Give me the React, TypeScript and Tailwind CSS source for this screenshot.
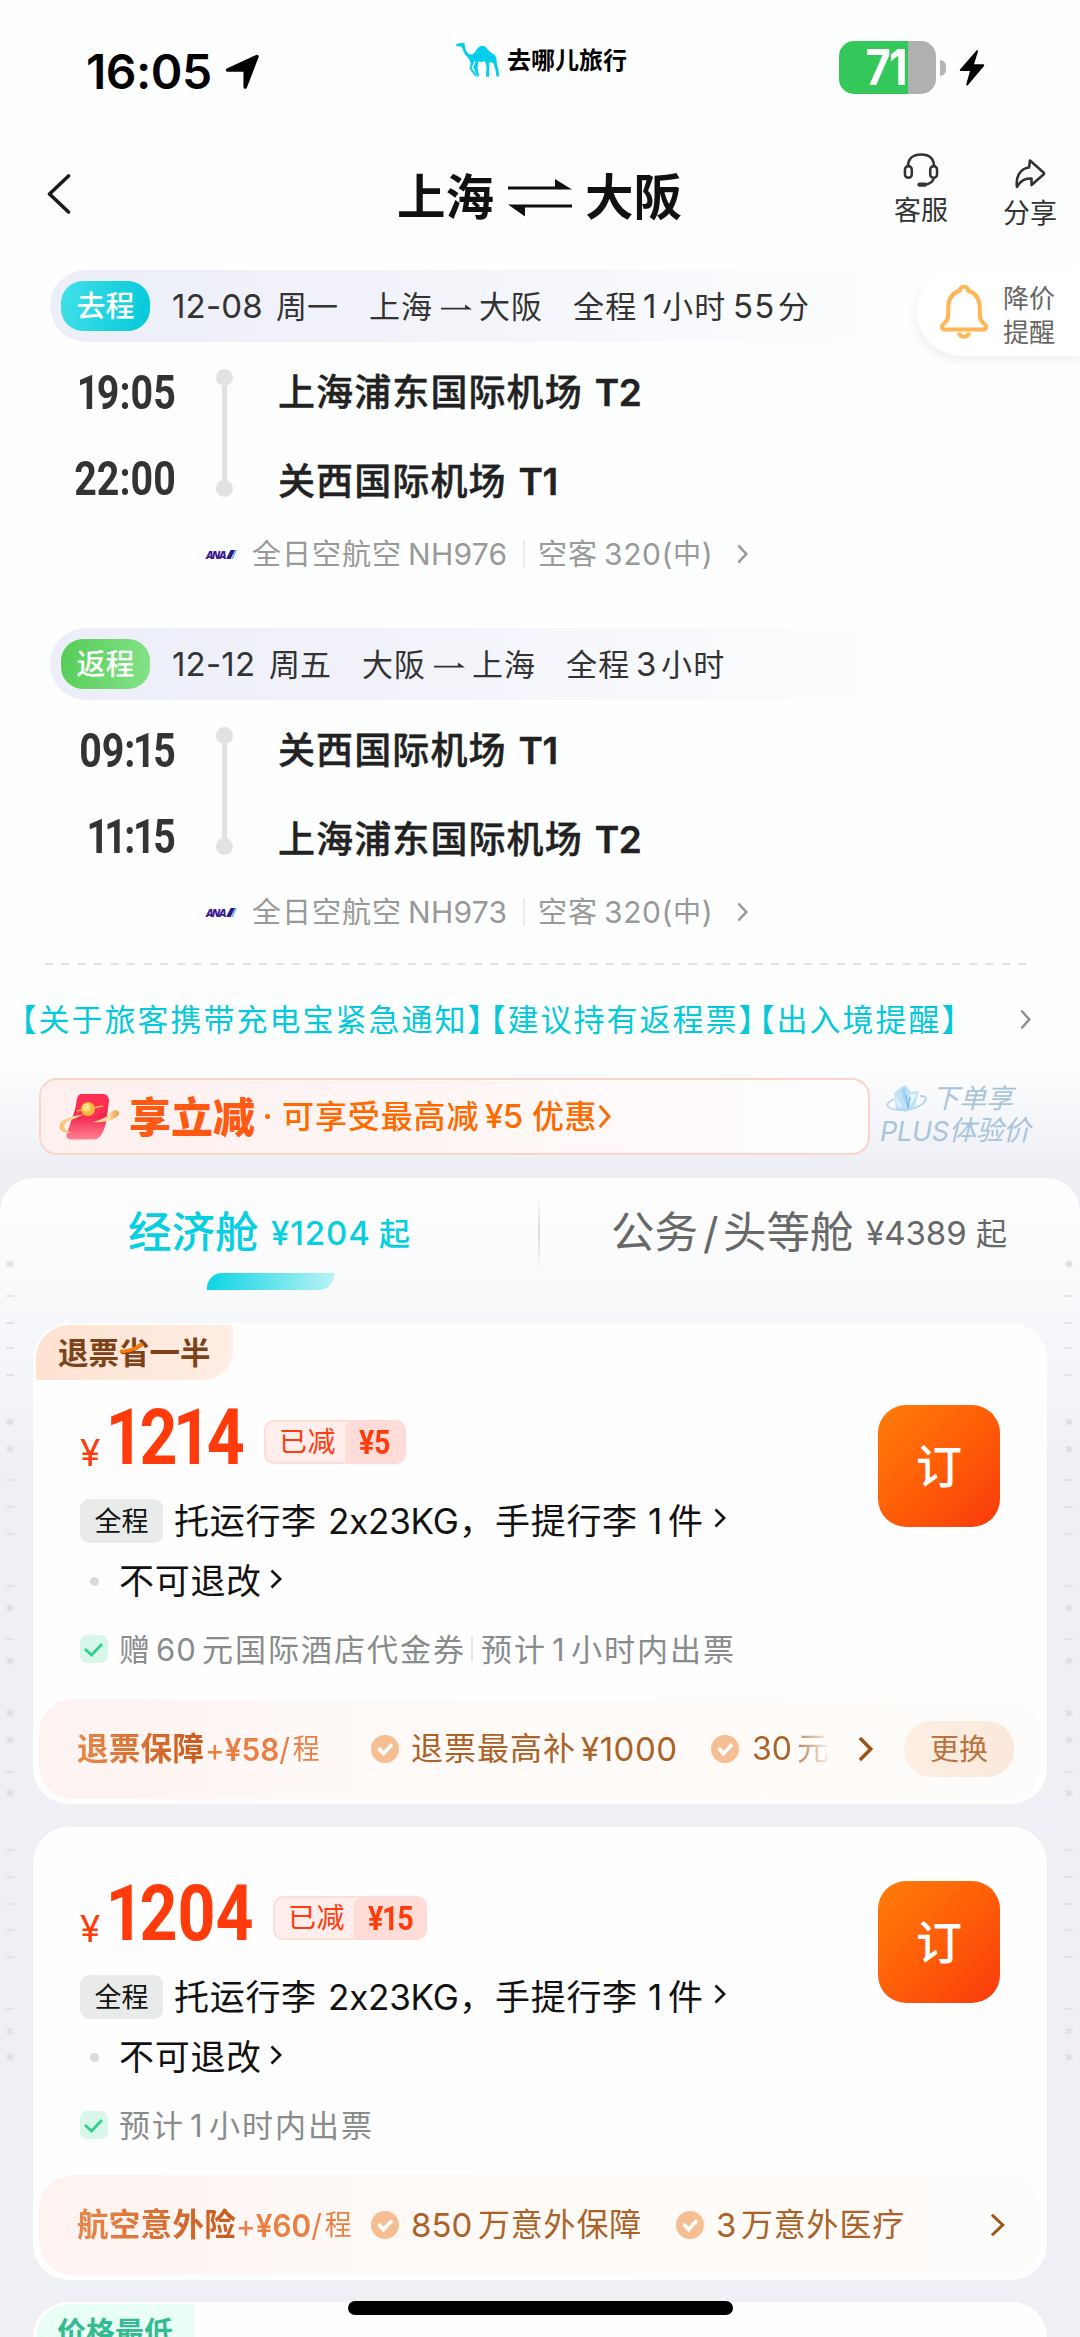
import React from "react";

type Leg = {
  tag: string;
  tagClass: string;
  date: string;
  dateClass: string;
  day: string;
  from: string;
  to: string;
  duration: React.ReactNode;
  departTime: string;
  arriveTime: string;
  departAirport: string;
  departTerminal: string;
  arriveAirport: string;
  arriveTerminal: string;
  flight: string;
};

function Chevron({ className, stroke = 2.5 }: { className: string; stroke?: number }) {
  return (
    <svg viewBox="0 0 12 20" preserveAspectRatio="none" className={"shrink-0 " + className} fill="none" stroke="currentColor" strokeWidth={stroke}>
      <path d="M1.5 1.5 L10.2 10 L1.5 18.5" />
    </svg>
  );
}

/* Condensed numerals in which the digit 1 is narrower than the others. */
function Digits({ value, oneClass, className }: { value: string; oneClass: string; className: string }) {
  return (
    <span className={"inline-block whitespace-nowrap " + className}>
      {value.split("").map((ch, i) => (ch === "1" ? <span key={i} className={oneClass}>1</span> : ch))}
    </span>
  );
}

function Camel() {
  return (
    <svg viewBox="0 0 46 36" className="h-[36px] w-[46px]" fill="#05cdec">
      <path d="M1 2 L2 .8 L6 0 L9.5 0 L10 4 C11 8 12.500 11 16 11.500 C20 11.500 20 7 24 4 C27 1.800 30 2.500 32 5.500 C34 9.500 38 9.500 40.500 13 C42.500 17 41 21 43 25 L44.300 33.500 L41.500 33.500 L40.500 27 L38.500 20.500 C37 19.500 35 19 34.300 19.500 L34 33.800 L31 33.800 L31.500 24 L30 18 C27 19.500 25 19 23.500 18.500 L22.500 24.500 L24 33.500 L21.600 33.500 L19.600 26.500 L18 24.500 L20.500 19 C20 18 19.800 18 19.500 18 L16.500 25 L21 31.500 L20 33.500 L14.500 25.500 C16.500 20 15.500 18 12.500 14 C9 11.500 8.500 8 7.500 5.500 L6 3.500 L1.500 3.200 Z" />
    </svg>
  );
}

function StatusBar() {
  return (
    <div className="flex h-[140px] items-start">
      <div className="mt-[48px] ml-[86px] flex h-12 w-[138px] items-center text-[48px] font-semibold tracking-[-0.5px] text-black">16:05</div>
      <svg viewBox="0 0 36 36" className="mt-[54px] h-[36px] w-[37px]">
        <path d="M32.500 2.500 L20.700 33 V16 H3 Z" fill="#000" stroke="#000" strokeWidth="3.500" strokeLinejoin="round" />
      </svg>
      <div className="mt-[43px] ml-[194px]"><Camel /></div>
      <div className="mt-[47px] ml-[6px] flex h-7 w-[332px] items-center text-[24px] font-bold text-black">去哪儿旅行</div>
      <div className="mt-[41px] flex h-[53px] w-[97px] items-center justify-center overflow-hidden rounded-[15px] bg-[linear-gradient(90deg,#34c759_0,#34c759_69px,#b0b0b0_69px)] text-[49px] font-bold tracking-[-2px] text-white">
        <span className="-ml-1 inline-block scale-x-[0.88]">71</span>
      </div>
      <div className="mt-[60px] ml-[4px] h-[16px] w-[6px] rounded-r-full bg-[#b5b5b5]" />
      <svg viewBox="0 0 26 36" className="mt-[50px] ml-[13px] h-[36px] w-[26px]">
        <path d="M17.500 .5 L1 19.500 Q.2 21 1.800 21 H11 L7.300 34 Q7.300 36.500 9 35 L25 16 Q25.800 14.300 24 14.300 H15 L18.800 2 Q19 -.8 17.500 .5 Z" fill="#000" />
      </svg>
    </div>
  );
}

function Header() {
  return (
    <div className="flex h-[130px] items-start">
      <svg viewBox="0 0 24 40" className="mt-[34px] ml-[47px] h-[40px] w-[24px]" fill="none" stroke="#1a1a1a" strokeWidth="3.600" strokeLinecap="round" strokeLinejoin="round">
        <path d="M21.500 2 L2.500 20 L21.500 38" />
      </svg>
      <div className="mt-[33px] ml-[326px] flex h-[50px] w-[288px] items-center text-[48.500px] font-semibold text-[#111]">
        <span className="w-[111px] shrink-0">上海</span>
        <svg viewBox="0 0 64 38" className="h-[38px] w-[64px] shrink-0" fill="#111">
          <path d="M0 7.600 H47 V0 L64 10.600 H0 Z M64 28.500 H17 V37.500 L0 25.500 H64 Z" />
        </svg>
        <span className="ml-[13px] shrink-0">大阪</span>
      </div>
      <div className="mt-[13px] ml-[208px] flex w-[56px] flex-col items-center text-[27px] text-[#333]">
        <svg viewBox="0 0 36 36" className="h-[35px] w-[36px]" fill="none" stroke="#333" strokeWidth="2.600">
          <path d="M4.500 14.500 C4.500 5.500 10 1.500 18 1.500 S31.500 5.500 31.500 14.500" />
          <rect x="1.500" y="13.500" width="7" height="12" rx="3.500" />
          <rect x="27.500" y="13.500" width="7" height="12" rx="3.500" />
          <path d="M31 25.500 C30.500 30.500 26 32 21.500 32.500" />
          <path d="M16.500 32.500 H22" strokeWidth="4.500" strokeLinecap="round" />
        </svg>
        <span className="mt-[9px]">客服</span>
      </div>
      <div className="mt-[18px] ml-[53px] flex w-[56px] flex-col items-center text-[27px] text-[#333]">
        <svg viewBox="0 0 32 32" className="h-[32px] w-[32px]" fill="none" stroke="#333" strokeWidth="2.600" strokeLinejoin="round">
          <path d="M16 2.500 L29.500 14.500 Q30.500 15.500 29.500 16.500 L17.500 27 V20.500 C10 20 6 23 3 29 C1.500 19 6 10.500 15 9.500 Z" />
        </svg>
        <span className="mt-[10px]">分享</span>
      </div>
    </div>
  );
}

function LegView({ leg }: { leg: Leg }) {
  return (
    <section className="h-[303px] text-[#222]">
      <div className="ml-[50px] flex h-[72px] w-[880px] items-center rounded-l-[36px] bg-[linear-gradient(90deg,#eceef8_0%,#f1f2f9_35%,#f7f8fc_62%,#fdfefe_100%)] text-[31px] text-[#333]">
        <div className={"ml-[11px] flex h-[50px] w-[89px] shrink-0 items-center justify-center rounded-[22px] text-[29px] font-medium text-white " + leg.tagClass}>{leg.tag}</div>
        <span className={"ml-[22px] shrink-0 text-[33px] tracking-[0.2px] whitespace-nowrap " + leg.dateClass}>{leg.date}</span>
        <span className="w-[93px] shrink-0">{leg.day}</span>
        <span className="w-[72px] shrink-0 tracking-[1px]">{leg.from}</span>
        <svg viewBox="0 0 31 8" className="mt-[2px] h-[8px] w-[31px] shrink-0" fill="#333"><path d="M0 4.700 H24 V1.500 L31 6.500 H0 Z" /></svg>
        <span className="ml-[7px] w-[94px] shrink-0 tracking-[1px]">{leg.to}</span>
        <span className="flex items-center tracking-[1.200px] whitespace-nowrap">{leg.duration}</span>
      </div>

      <div className="mt-[15px] flex h-[178px]">
        <div className="w-[176px] pt-[2px] text-right font-['Roboto'] text-[48px] font-bold text-[#333]">
          <div className="flex h-[68px] items-center justify-end"><Digits value={leg.departTime} oneClass="-mx-[3px]" className="origin-right scale-x-[0.82]" /></div>
          <div className="flex h-[103px] items-center justify-end"><Digits value={leg.arriveTime} oneClass="-mx-[3px]" className="origin-right scale-x-[0.82]" /></div>
        </div>
        <div className="mt-[12px] ml-[40px] flex h-[128px] w-[17px] flex-col items-center">
          <i className="h-[17px] w-[17px] rounded-full bg-[#e0e3e4]" />
          <i className="w-[5px] flex-1 bg-[#e0e3e4]" />
          <i className="h-[17px] w-[17px] rounded-full bg-[#e0e3e4]" />
        </div>
        <div className="ml-[45px] text-[37px] font-medium tracking-[1.100px] whitespace-nowrap [-webkit-text-stroke:0.4px_#222]">
          <div className="flex h-[70px] items-center">{leg.departAirport}<span className="ml-[12px] font-semibold tracking-[-0.5px]">{leg.departTerminal}</span></div>
          <div className="flex h-[108px] items-center">{leg.arriveAirport}<span className="ml-[12px] font-semibold tracking-[-0.5px]">{leg.arriveTerminal}</span></div>
        </div>
      </div>

      <div className="flex h-[38px] items-center text-[29px] tracking-[1px] text-[#999]">
        <span className="ml-[206px] w-[20px] shrink-0 font-['Open_Sans'] text-[11px] font-extrabold tracking-[-1.600px] text-[#3c1a92] italic">ANA</span>
        <svg viewBox="0 0 12 10" className="mr-[15px] h-[9px] w-[11px] shrink-0"><path d="M0 10 L5 0 H10 L5 10 Z" fill="#2b1a8c" /><path d="M6 10 L10.500 0 H12 L7.500 10 Z" fill="#3bb2ea" /></svg>
        <span className="w-[156px] shrink-0">全日空航空</span>
        <span className="w-[115px] shrink-0 text-[30px] tracking-[0.3px]">{leg.flight}</span>
        <i className="mr-[13px] h-[28px] w-[2px] bg-[#ebebeb]" />
        <span className="w-[66px] shrink-0">空客</span>
        <span className="flex w-[133px] shrink-0 items-center text-[30px] tracking-[0.600px] whitespace-nowrap">320(<span className="text-[28px]">中</span>)</span>
        <Chevron className="h-[20px] w-[11px] text-[#999]" />
      </div>
    </section>
  );
}

function PriceAlert() {
  return (
    <div className="absolute top-[267px] right-0 flex h-[89px] w-[163px] items-center rounded-l-full bg-white text-[26px] leading-[34px] text-[#666] shadow-[-2px_5px_10px_rgba(0,0,0,0.05)]">
      <svg viewBox="0 0 48 54" className="ml-[23px] h-[54px] w-[48px]" fill="none" stroke="#ffb655" strokeWidth="4" strokeLinejoin="round">
        <path d="M20 5.500 A4 4 0 0 1 28 5.500 C37 8.500 39.800 15 39.800 23 V31 C39.800 34 41 36 44 38.500 C47.500 41.500 46 44.500 43 44.500 H5 C2 44.500 .5 41.500 4 38.500 C7 36 8.200 34 8.200 31 V23 C8.200 15 11 8.500 20 5.500 Z" />
        <path d="M19 47.500 C20 53.200 28 53.200 29 47.500" />
      </svg>
      <div className="mt-[9px] ml-[15px] w-[60px]">降价<br />提醒</div>
    </div>
  );
}

function RedPacket() {
  return (
    <svg viewBox="0 0 64 50" className="h-[50px] w-[64px] shrink-0">
      <defs>
        <linearGradient id="packet" x1="0" y1="0" x2="0" y2="1"><stop offset="0" stopColor="#fb2b4f" /><stop offset=".5" stopColor="#f32850" /><stop offset="1" stopColor="#ff8290" /></linearGradient>
        <linearGradient id="ring" x1="0" y1="0" x2="1" y2="0"><stop offset="0" stopColor="#f9bd68" /><stop offset=".6" stopColor="#fde0a8" /><stop offset="1" stopColor="#e89a3a" /></linearGradient>
      </defs>
      <path d="M25 2 H46 Q52 2.500 52 9 L50 24 C49 33 46 46 38 47.500 H14 Q8 47 10 41 L18 18 L20 7 Q21 2.500 25 2 Z" fill="url(#packet)" />
      <path d="M19 23 Q33 31 51 17 V8 Q51 2 46 2 H25 Q21 2 20 7 Z" fill="#ff3154" opacity=".8" />
      <path d="M14 41 C5 42 1 37 3 32 C6 26 16 24 28 22 C17 27 7 30 7 34 C7 37 10 39 14 41 Z" fill="url(#ring)" />
      <path d="M36 30 C47 27 53 23 54 20 C57 17 63 18 62 22 C59 28 46 31 36 30 Z" fill="url(#ring)" />
      <path d="M20 19 L46 14" stroke="#ffab4c" strokeWidth="1.500" />
      <circle cx="31" cy="17" r="7" fill="#f9b63c" /><circle cx="29.500" cy="15.500" r="4" fill="#ffe082" />
    </svg>
  );
}

function Diamond() {
  return (
    <svg viewBox="0 0 42 28" className="h-[28px] w-[42px] shrink-0">
      <path d="M9 8 L16 2 L21 0 L26 7 L34 6 L30 21 L21 27 L11 24 Z" fill="#bfe2f8" />
      <path d="M16 4 L20 20 L21 3 Z" fill="#a5d3f2" /><path d="M25 9 L23 24 L32 9 Z" fill="#e5f5ff" /><path d="M10 9 L13 22 L17 22 Z" fill="#dff1fc" />
      <path d="M21 10 L23 24 L25 12" fill="none" stroke="#7dbbe8" strokeWidth="1.500" />
      <path d="M9 14 C-2 19 1 25 17 25 C33 25 44 16 40 12 C39 11 37 11 35 11" fill="none" stroke="#b5d5ee" strokeWidth="1.800" />
    </svg>
  );
}

function PromoRow() {
  return (
    <div className="flex h-[118px] items-start bg-[linear-gradient(180deg,#fdfefe_0%,#f6f7fa_45%,#eeeff4_90%)] pt-[18px]">
      <div className="ml-[39px] flex h-[77px] w-[831px] shrink-0 items-center rounded-[18px] border-2 border-[#fbd5c8] bg-[linear-gradient(90deg,#fdf0ef_0%,#fef5f4_40%,#fffefe_100%)] text-[32px] font-medium text-[#ff6a00]">
        <div className="ml-[16px]"><RedPacket /></div>
        <span className="mt-[2px] ml-[8px] w-[127px] text-[42px] font-black text-[#ff5a14]">享立减</span>
        <span className="mr-[12px] ml-[9px] h-[5px] w-[5px] rounded-full bg-[#ff6a00]" />
        <span className="w-[203px] tracking-[0.900px]">可享受最高减</span>
        <span className="w-[47px] text-[33px] tracking-[-0.500px]">¥5</span>
        <span className="w-[66px] tracking-[0.500px]">优惠</span>
        <Chevron className="h-[25px] w-[13px]" stroke={2.6} />
      </div>
      <div className="mt-[4px] ml-[10px] w-[165px] text-[27px] text-[#a9c4da] italic">
        <div className="flex h-[33px] items-center"><div className="mr-[5px] ml-[5px]"><Diamond /></div>下单享</div>
        <div className="flex h-[32px] items-center text-[27.500px] tracking-[-0.3px] whitespace-nowrap"><span className="text-[27px]">PLUS</span>体验价</div>
      </div>
    </div>
  );
}

function CheckDot() {
  return (
    <svg viewBox="0 0 28 28" className="h-[28px] w-[28px] shrink-0">
      <circle cx="14" cy="14" r="14" fill="#f6bf93" />
      <path d="M7.500 13 L12.500 18.500 L21 9.500" fill="none" stroke="#fff" strokeWidth="3.600" />
    </svg>
  );
}

function FareBody({ price, off, wide, notes }: { price: string; off: string; wide?: boolean; notes: React.ReactNode }) {
  return (
    <div className="flex h-[319px]">
      <div className="w-[845px] shrink-0 pl-[47px]">
        <div className="mt-[20px] flex h-[71px] items-center text-[#ff3b0c]">
          <span className="mt-[33px] w-[30px] text-[37px]">¥</span>
          <span className={(wide ? "w-[163px]" : "w-[154px]") + " mt-[6px] shrink-0 font-['Roboto'] text-[77px] font-bold"}>
            <Digits value={price} oneClass="-mx-[5px]" className="origin-left scale-x-[0.86]" />
          </span>
          <div className={"mt-[13px] flex h-[44px] shrink-0 items-center overflow-hidden rounded-[10px] border-2 border-[#ffdcd7] bg-[#ffeeec] text-[28px] font-normal " + (wide ? "w-[154px]" : "w-[142px]")}>
            <span className="ml-[13px] w-[66px] shrink-0 tracking-[0.600px]">已减</span>
            <span className="-mr-1 flex h-[46px] flex-1 items-center rounded-tl-[12px] bg-[#ffdcd7] pl-[14px] font-['Roboto'] text-[34px] font-bold tracking-[-0.500px]">
              <Digits value={off} oneClass="-mx-[1px]" className="origin-left scale-x-[0.84]" />
            </span>
          </div>
        </div>
        <div className="mt-[25px] flex h-[50px] items-center text-[35px] tracking-[0.700px] whitespace-nowrap text-[#111]">
          <span className="mr-[11px] flex h-[44px] w-[83px] items-center justify-center rounded-[9px] bg-[#e9ebea] text-[27px] tracking-[0px]">全程</span>
          <span className="w-[154px]">托运行李</span>
          <span className="w-[131px] tracking-[-0.2px]">2x23KG</span>
          <span className="w-[36px]">，</span>
          <span className="w-[153px]">手提行李</span>
          <span className="w-[20px]">1</span>
          <span className="w-[46px]">件</span>
          <Chevron className="mt-[-6px] h-[20px] w-[12px]" stroke={2.6} />
        </div>
        <div className="mt-[10px] flex h-[50px] items-center text-[35px] tracking-[0.700px] whitespace-nowrap text-[#111]">
          <i className="mr-[20px] ml-[10px] h-[9px] w-[9px] rounded-full bg-[#d8dadb]" />
          <span className="mt-[1px] w-[151px]">不可退改</span>
          <Chevron className="mt-[-4px] h-[20px] w-[12px]" stroke={2.6} />
        </div>
        <div className="mt-[18px] flex h-[50px] items-center text-[31px] tracking-[2px] whitespace-nowrap text-[#888c8c]">
          <svg viewBox="0 0 28 28" className="mr-[11px] h-[28px] w-[28px] shrink-0"><rect width="28" height="28" rx="7" fill="#d9f6ea" /><path d="M5 14 L11.500 20 L22 9" fill="none" stroke="#2fd08e" strokeWidth="2.800" /></svg>
          {notes}
        </div>
      </div>
      <div className="mt-[25px] flex h-[122px] w-[122px] items-center justify-center rounded-[28px] bg-[linear-gradient(135deg,#ff7d08_0%,#ff5e08_50%,#f93a0c_100%)] text-[46px] font-medium text-white">订</div>
    </div>
  );
}

function GradientLabel({ name, price, className, nameClass }: { name: string; price: string; className: string; nameClass: string }) {
  return (
    <span className={"flex shrink-0 items-center whitespace-nowrap " + className}>
      <span className={"shrink-0 bg-[linear-gradient(90deg,#e8874b,#c85a1c)] bg-clip-text py-2 text-[31.500px] font-bold text-transparent " + nameClass}>{name}</span>
      <span className="flex origin-left scale-x-[0.96] items-center text-[31px] text-[#eb7f42]">+<b className="font-semibold">{price}</b>/<span className="ml-[3px] text-[28px]">程</span></span>
    </span>
  );
}

const EDGE_MARKS: [number, string][] = [
  [1264, "*"], [1296, "-"], [1323, "-"], [1348, "-"], [1375, "-"], [1422, "*"], [1449, "*"], [1480, "-"], [1507, "-"], [1534, "-"],
  [1586, "-"], [1608, "*"], [1639, "-"], [1661, "*"], [1713, "*"], [1740, "*"], [1772, "-"], [1793, "*"], [1850, "-"], [1877, "-"],
  [1904, "-"], [1930, "-"], [1957, "-"], [2009, "-"], [2031, "*"], [2057, "*"],
];

function EdgeMarks({ className }: { className: string }) {
  return (
    <svg viewBox="0 1178 10 900" className={"absolute top-[1178px] h-[900px] w-[10px] " + className} stroke="#dcdde1" strokeWidth="1.500" fill="none">
      {EDGE_MARKS.map(([y, kind]) => (
        <path key={y} d={kind === "-" ? `M1 ${y} H9` : `M5 ${y - 4} V${y + 4} M1.500 ${y - 2} L8.500 ${y + 2} M8.500 ${y - 2} L1.500 ${y + 2}`} />
      ))}
    </svg>
  );
}

const legs: Leg[] = [
  {
    tag: "去程", tagClass: "bg-[linear-gradient(100deg,#42e0e8,#04c8da)]", date: "12-08", dateClass: "w-[104px]", day: "周一", from: "上海", to: "大阪",
    duration: <><span className="w-[70px]">全程</span><span className="w-[19px] text-[33px]">1</span><span className="w-[71px]">小时</span><span className="w-[45px] text-[33px]">55</span>分</>,
    departTime: "19:05", arriveTime: "22:00", departAirport: "上海浦东国际机场", departTerminal: "T2", arriveAirport: "关西国际机场", arriveTerminal: "T1", flight: "NH976",
  },
  {
    tag: "返程", tagClass: "bg-[linear-gradient(100deg,#55cc57,#84e388)]", date: "12-12", dateClass: "w-[97px]", day: "周五", from: "大阪", to: "上海",
    duration: <><span className="w-[70px]">全程</span><span className="w-[25px] text-[33px]">3</span>小时</>,
    departTime: "09:15", arriveTime: "11:15", departAirport: "关西国际机场", departTerminal: "T1", arriveAirport: "上海浦东国际机场", arriveTerminal: "T2", flight: "NH973",
  },
];

export default function App() {
  return (
    <div className="relative h-[2337px] w-[1080px] overflow-hidden bg-[#fdfefe] font-['Inter','Noto_Sans_CJK_SC',sans-serif] leading-none">
      <StatusBar />
      <Header />
      <LegView leg={legs[0]} />
      <div className="h-[55px]" />
      <LegView leg={legs[1]} />
      <PriceAlert />

      <div className="mt-[32px] ml-[45px] h-[2px] w-[985px] bg-[repeating-linear-gradient(90deg,#dfe3e2_0,#dfe3e2_8px,transparent_8px,transparent_16.500px)]" />
      <div className="mt-[15px] flex h-[79px] items-center text-[31px] tracking-[2px] whitespace-nowrap text-[#05c9da] [font-feature-settings:'halt']">
        <span className="ml-[21px] w-[469px]">【关于旅客携带充电宝紧急通知】</span>
        <span className="w-[269px]">【建议持有返程票】</span>
        <span className="w-[261px]">【出入境提醒】</span>
        <Chevron className="h-[21px] w-[11px] text-[#8c8f8f]" />
      </div>
      <div className="h-px" />
      <PromoRow />

      <div className="h-[1159px] bg-[#eeeff4]">
        <main className="h-full rounded-t-[34px] bg-[linear-gradient(180deg,#fefefe_0,#fdfdfd_40px,#f7f8fb_140px,#eff0f5_290px)]">
          <div className="flex h-[111px]">
            <div className="w-[538px]">
              <div className="flex h-[95px] items-center pt-[15px] pl-[128px] whitespace-nowrap text-[#05cfe0]">
                <span className="w-[143px] text-[43.500px] font-medium">经济舱</span>
                <span className="w-[108px] text-[33px] font-medium tracking-[0.900px]">¥1204</span>
                <span className="text-[31px] font-medium">起</span>
              </div>
              <div className="ml-[207px] h-[17px] w-[127px] rounded-tl-[15px] rounded-br-[15px] bg-[linear-gradient(90deg,#0cd5e4,#b9f2f5)]" />
            </div>
            <div className="mt-[18px] h-[74px] w-[2px] bg-[linear-gradient(180deg,transparent,#d9dadd,transparent)]" />
            <div className="flex h-[95px] items-center pt-[15px] pl-[71px] whitespace-nowrap text-[#666869]">
              <span className="w-[92px] text-[43.500px]">公务</span>
              <span className="w-[20px] text-[43px]">/</span>
              <span className="w-[143px] text-[43.500px]">头等舱</span>
              <span className="w-[110px] text-[33px] tracking-[0px]">¥4389</span>
              <span className="text-[31px]">起</span>
            </div>
          </div>

          <article className="mx-[33px] mt-[34px] h-[481px] rounded-[36px] bg-[#fefefe] pt-[2px]">
            <div className="ml-[3px] flex h-[55px] w-[197px] items-center rounded-tl-[34px] rounded-br-[30px] bg-[linear-gradient(90deg,#fee2d0,#feeee5)] pt-[2px] pl-[22px] text-[30.500px] font-bold text-[#7c431a]">
              退票
              <span className="relative">省
                <svg viewBox="0 0 26 10" className="absolute top-[5px] left-0 h-[10px] w-[26px]"><path d="M1 8.500 Q14 8 24 1" fill="none" stroke="#ff7a08" strokeWidth="3.500" /></svg>
              </span>
              一半
            </div>
            <FareBody
              price="1214"
              off="¥5"
              notes={<><span className="w-[37px]">赠</span><span className="w-[46px] tracking-[1px]">60</span><span className="w-[269px]">元国际酒店代金券</span><i className="mr-[8px] h-[26px] w-[2px] bg-[#e6e7e7]" /><span className="w-[71px]">预计</span><span className="w-[19px]">1</span>小时内出票</>}
            />
            <div className="ml-[6px] flex h-[100px] w-[1001px] items-center rounded-[34px] bg-[linear-gradient(90deg,#fef3f0_0%,#fef9f7_30%,#fefcfa_100%)] text-[32px] whitespace-nowrap text-[#ab6227]">
              <GradientLabel name="退票保障" price="¥58" className="ml-[38px] w-[294px]" nameClass="w-[128px] tracking-[0.3px]" />
              <CheckDot />
              <span className="ml-[12px] w-[170px] shrink-0 tracking-[1px]">退票最高补</span>
              <span className="w-[130px] shrink-0 text-[33px] tracking-[0.500px]">¥1000</span>
              <CheckDot />
              <span className="ml-[13px] flex w-[78px] shrink-0 items-center py-2 [mask-image:linear-gradient(90deg,#000_45%,transparent_102%)]"><span className="w-[45px] shrink-0">30</span>元</span>
              <Chevron className="ml-[28px] h-[26px] w-[15px] text-[#9b5418]" stroke={2.8} />
              <span className="ml-[31px] flex h-[56px] w-[110px] shrink-0 items-center justify-center rounded-[27px] bg-[linear-gradient(90deg,#fcefe4,#fbe8da)] text-[29px] text-[#b8733e]">更换</span>
            </div>
          </article>

          <article className="mx-[33px] mt-[23px] h-[453px] rounded-[36px] bg-[#fefefe] pt-[29px]">
            <FareBody price="1204" off="¥15" wide notes={<><span className="w-[71px]">预计</span><span className="w-[19px]">1</span>小时内出票</>} />
            <div className="ml-[6px] flex h-[100px] w-[1001px] items-center rounded-[34px] bg-[linear-gradient(90deg,#fef3f0_0%,#fef9f7_30%,#fefcfa_100%)] text-[32px] whitespace-nowrap text-[#ab6227]">
              <GradientLabel name="航空意外险" price="¥60" className="ml-[38px] w-[294px]" nameClass="w-[159px] tracking-[0.3px]" />
              <CheckDot />
              <span className="ml-[12px] w-[67px] shrink-0 text-[33px]">850</span>
              <span className="w-[198px] shrink-0 tracking-[0.800px]">万意外保障</span>
              <CheckDot />
              <span className="ml-[12px] w-[25px] shrink-0 text-[33px]">3</span>
              <span className="w-[249px] shrink-0 tracking-[0.800px]">万意外医疗</span>
              <Chevron className="h-[24px] w-[15px] text-[#9b5418]" stroke={2.4} />
            </div>
          </article>

          <article className="mx-[33px] mt-[22px] h-[35px] rounded-t-[36px] bg-[#fefefe] pt-[2px]">
            <div className="ml-[3px] flex h-[55px] w-[158px] items-center rounded-tl-[34px] bg-[#e9fef4] pt-[2px] pl-[21px] text-[29px] font-bold text-[#35bb92]">价格最低</div>
          </article>
        </main>
      </div>

      <EdgeMarks className="left-[5px]" />
      <EdgeMarks className="right-[6px]" />
      <div className="absolute top-[2301px] left-[348px] h-[14px] w-[385px] rounded-full bg-black" />
    </div>
  );
}
